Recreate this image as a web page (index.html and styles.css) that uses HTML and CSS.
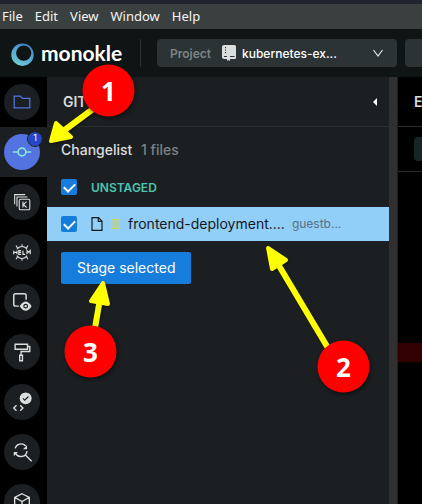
FILE: index.html
```html
<!DOCTYPE html>
<html lang="en">
<head>
<meta charset="utf-8">
<title>Monokle</title>
<link rel="stylesheet" href="styles.css">
</head>
<body>
<nav class="menubar">
  <button>File</button><button>Edit</button><button>View</button><button>Window</button><button>Help</button>
</nav>
<header class="topbar">
  <a class="brand" href="#">
    <svg class="logo" viewBox="0 0 24 24" aria-hidden="true">
      <defs><linearGradient id="ring" x1="0.8" y1="0" x2="0.3" y2="1"><stop offset="0" stop-color="#3c80cf"/><stop offset="1" stop-color="#71cbd2"/></linearGradient></defs>
      <path fill="url(#ring)" fill-rule="evenodd" d="M12.500 2.500a11.200 11.200 0 1 1 0 22.400A11.200 11.200 0 0 1 12.500 2.500zM13.700 4.500a7.600 7.600 0 1 0 0 15.200 7.600 7.600 0 0 0 0-15.200z"/>
    </svg>
    <span>monokle</span>
  </a>
  <span class="divider"></span>
  <button class="project">
    <span class="project-label">Project</span>
    <svg class="repo" viewBox="0 0 14 16" aria-hidden="true"><path fill="#dcdede" d="M2 0h10.500Q14 0 14 1.500V13q0 1-1 1H8v2l-1.500-1L5 16v-2H2q-2 0-2-2V2Q0 0 2 0z"/><path stroke="#2b3335" d="M3.500 2v1.200M3.500 4.500v1.200M3.500 7v1.200M2 11.500h3M8 11.500h4.500" fill="none"/></svg>
    <span class="project-name">kubernetes-ex...</span>
    <svg class="chevron" viewBox="0 0 10 8" aria-hidden="true"><path d="M.5 1 5 7 9.500 1" fill="none" stroke="#e4e6e6" stroke-width="1.200"/></svg>
  </button>
  <button class="cluster" aria-label="Cluster"></button>
</header>
<main class="workspace">
  <nav class="rail">
    <div class="slot"><button class="tool blue" aria-label="Files"><svg viewBox="0 0 24 24"><path d="M3.500 5.500h6.500l2.500 2.500H20.500V18.500H3.500z"/></svg></button></div>
    <div class="slot active"><button class="tool current" aria-label="Git"><svg viewBox="0 0 24 24"><circle cx="12" cy="12" r="4.200"/><path d="M2 12H8M16 12h6"/></svg><span class="count">1</span></button></div>
    <div class="slot"><button class="tool" aria-label="Kustomize"><svg viewBox="0 0 24 24"><rect x="9" y="9" width="11.500" height="11.500" rx="1.500"/><path d="M6.500 17V6.500H18M4 14.500V4h11.500M13 11.500v6.500M17 11.500l-3.500 3.200 3.500 3.300"/></svg></button></div>
    <div class="slot"><button class="tool" aria-label="Helm"><svg viewBox="0 0 24 24"><path d="M6.500 9a6.500 6.500 0 0 1 11 0M6.500 16a6.500 6.500 0 0 0 11 0M12 6V3.500M12 19v2.500M7 7.500 5.500 5M17 7.500 18.500 5M7 17.500 5.500 20M17 17.500l1.500 2.500"/><path stroke-width="1.300" d="M3 10.500v4M6.500 10.500v4M3 12.500h3.500M11 10.500H8.500v4H11M8.500 12.500H11M13 10.500v4h2.500M17.500 14.500v-4l1.700 2 1.800-2v4"/></svg></button></div>
    <div class="slot"><button class="tool" aria-label="Preview"><svg viewBox="0 0 24 24"><path stroke-width="1.600" d="M8.500 16.500H5Q3 16.500 3 14.500V5Q3 3 5 3H14.500Q16.500 3 16.500 5V9.500"/><path fill="#dcdede" stroke="none" d="M9.500 16.500q6.500-10 13 0-6.500 10-13 0z"/><circle cx="16" cy="16.500" r="2" stroke="#1b1f21" stroke-width="1.300"/></svg></button></div>
    <div class="slot"><button class="tool" aria-label="Templates"><svg viewBox="0 0 24 24"><path stroke-width="1.500" d="M4.500 3.500h13.500V9H4.500zM18 6h2.500v5.500h-9.500V15M9.500 15.500h3v6H9.500z"/></svg></button></div>
    <div class="slot"><button class="tool" aria-label="Validation"><svg viewBox="0 0 24 24"><circle cx="16" cy="8" r="6.500" fill="#dcdede" stroke="none"/><path stroke="#1b1f21" d="M13 8l2 2 4-4"/><path stroke-width="1.500" d="M6 15.500 3 18.500 6 21.500M10 15.500l3 3-3 3"/></svg></button></div>
    <div class="slot"><button class="tool" aria-label="Search"><svg viewBox="0 0 24 24"><path stroke-width="1.500" d="M4.500 8a6.700 6.700 0 0 1 11.500-2.500M17.500 11a6.700 6.700 0 0 1-12.500 2.500M16 15.500l6.500 6.500"/><path fill="#dcdede" stroke="none" d="M17.500 4.500v4.500H13zM3 16.500V12h4.500z"/></svg></button></div>
    <div class="slot"><button class="tool" aria-label="Images"><svg viewBox="0 0 24 24"><path stroke-width="1.500" d="M12 3 20 7v9.500L12 21 4 16.500V7zM4 7l8 4.500L20 7M12 11.500V21"/></svg></button></div>
  </nav>
  <section class="git">
    <div class="pane-head"><h1>GIT</h1><button class="collapse" aria-label="Collapse"><svg viewBox="0 0 4 8"><path fill="#fff" d="M4 0v8L0 4z"/></svg></button></div>
    <h2 class="changelist">Changelist <span>1 files</span></h2>
    <label class="group"><input type="checkbox" checked><span>UNSTAGED</span></label>
    <label class="file"><input type="checkbox" checked>
      <svg class="doc" viewBox="0 0 12 14" aria-hidden="true"><path d="M1 .7h6.500L11 4.200v9.100H1zM7.300.7v3.700H11" fill="none" stroke="#15191b" stroke-width="1.200"/></svg>
      <span class="dot"></span><span class="file-name">frontend-deployment....</span><span class="file-path">guestb...</span>
    </label>
    <button class="stage">Stage selected</button>
  </section>
  <div class="splitter"></div>
  <section class="editor">
    <div class="editor-head">E</div>
    <div class="editor-tools"><span class="chip"></span></div>
    <div class="code"><div class="removed"></div></div>
  </section>
</main>
<svg class="callouts" viewBox="0 0 422 504" role="img" aria-label="Steps 1, 2 and 3">
  <g class="arrow">
    <path class="shaft" d="M93 109 62 132"/><path class="head" d="M51 141 56 123 71 137z"/>
    <path class="shaft" d="M328 348 278 264"/><path class="head" d="M268 248 272 269 286 260z"/>
    <path class="shaft" d="M95 328 100 299"/><path class="head" d="M103 283 91 301 108 304z"/>
  </g>
  <g class="ball"><circle cx="108.500" cy="90.500" r="26"/><circle cx="343.500" cy="366.500" r="26"/><circle cx="90.500" cy="351.500" r="26"/></g>
  <g class="digit"><text x="108.500" y="101">1</text><text x="343.500" y="377">2</text><text x="90.500" y="362">3</text></g>
</svg>
</body>
</html>
```
FILE: styles.css
```css
* { box-sizing: border-box; }
body {
  margin: 0;
  height: 100vh;
  display: flex;
  flex-direction: column;
  overflow: hidden;
  position: relative;
  background: #000;
  color: #dcdede;
  font-family: Inter, "Liberation Sans", sans-serif;
}
button { border: 0; padding: 0; margin: 0; background: none; color: inherit; font: inherit; }
svg { display: block; flex: none; }

.menubar {
  display: flex;
  flex: none;
  gap: 12px;
  height: 29px;
  padding-left: 2px;
  border-top: 4px solid #20242f;
  background: #3a4040;
  color: #f4f4f4;
  font: 13px/24px "Noto Sans", sans-serif;
}
.menubar button { height: 24px; }

.topbar {
  display: flex;
  flex: none;
  align-items: center;
  height: 48px;
  padding-left: 10px;
  background: #0f1414;
}
.brand {
  display: flex;
  align-items: center;
  gap: 7px;
  width: 130px;
  color: #fff;
  font: bold 21px/24px Lato, sans-serif;
  text-decoration: none;
}
.logo { width: 24px; height: 24px; overflow: visible; }
.divider { width: 1px; height: 28px; margin-right: 16px; background: #2b2f31; }
.project {
  display: flex;
  flex: none;
  align-items: center;
  width: 240px;
  height: 28px;
  padding: 0 14px 0 13px;
  border-radius: 4px;
  background: #2b3335;
  font-size: 12px;
}
.project-label { color: #7d8384; font-weight: 600; }
.repo { width: 14px; height: 16px; margin: 0 6px 0 11px; }
.project-name { color: #fff; font-weight: 500; }
.chevron { width: 10px; height: 8px; margin-left: auto; }
.cluster { flex: 1; height: 28px; margin-left: 8px; border-radius: 4px 0 0 4px; background: #2b3335; }

.workspace { display: flex; flex: 1; min-height: 0; overflow: hidden; }
.rail { flex: none; width: 47px; background: #000; }
.slot { height: 50px; padding: 7px 4px; }
.active { background: #1b1f21; }
.tool {
  display: grid;
  place-items: center;
  position: relative;
  width: 36px;
  height: 36px;
  border-radius: 50%;
  background: #1b1f21;
}
.tool svg { width: 22px; height: 22px; fill: none; stroke: #dcdede; stroke-width: 1.2; }
.blue svg { stroke: #5273e0; stroke-width: 1.4; }
.current { background: #5273e0; }
.current svg { stroke: #82e8d8; stroke-width: 1.8; }
.count {
  position: absolute;
  top: -2px;
  right: -2px;
  width: 14px;
  height: 14px;
  border-radius: 50%;
  outline: 1px solid #1b1f21;
  background: #2447c9;
  color: #fff;
  font-size: 9px;
  line-height: 12px;
}

.git { flex: none; width: 342px; background: #1b1f21; }
.pane-head {
  display: flex;
  align-items: center;
  justify-content: space-between;
  height: 50px;
  padding: 0 12px 0 16px;
  border-bottom: 1px solid #2b2d2e;
}
.pane-head h1 { margin: 0; font-size: 14px; font-weight: 600; }
.collapse svg { width: 4px; height: 8px; }
.changelist { margin: 0; padding: 13px 14px; font-size: 14px; line-height: 20px; font-weight: 500; }
.changelist span { margin-left: 5px; color: #7d8384; }
.group {
  display: flex;
  align-items: center;
  gap: 14px;
  height: 28px;
  margin-bottom: 6px;
  padding-left: 14px;
  color: #4dc5b0;
  font-size: 12px;
  font-weight: 600;
}
.file {
  display: flex;
  align-items: center;
  height: 34px;
  padding-left: 14px;
  background: #91cff9;
  color: #15191b;
  white-space: nowrap;
}
input[type="checkbox"] {
  appearance: none;
  display: grid;
  place-items: center;
  flex: none;
  width: 16px;
  height: 16px;
  margin: 0;
  border-radius: 2px;
  background: #177ddc;
}
input[type="checkbox"]::after {
  content: "";
  width: 9px;
  height: 5px;
  margin-bottom: 2px;
  border: solid #fff;
  border-width: 0 0 2px 2px;
  transform: rotate(-45deg);
}
.doc { width: 12px; height: 14px; margin: 0 8px 0 14px; }
.dot { width: 9px; height: 10px; margin-right: 8px; border: 1px solid #d5d25c; border-radius: 2px; background: #adcfae; }
.file-name { padding-bottom: 2px; font-size: 14px; }
.file-path { padding-bottom: 2px; margin-left: 7px; color: #5a7180; font-size: 12px; }
.stage {
  height: 32px;
  margin: 11px 14px;
  padding: 0 16px 2px;
  border-radius: 2px;
  background: #177ddc;
  color: #fff;
  font-size: 14px;
}
.splitter { flex: none; width: 9px; background: #303030; border-right: 1px solid #1f1f1f; }
.editor { flex: 1; overflow: hidden; background: #000; }
.editor-head { height: 50px; padding-left: 16px; border-bottom: 1px solid #2b2d2e; font-size: 14px; font-weight: 600; line-height: 49px; }
.editor-tools { height: 45px; padding: 10px 0 0 16px; border-bottom: 1px solid #2b2d2e; }
.chip { display: block; height: 24px; border-radius: 4px 0 0 4px; background: #162625; }
.code { padding-top: 171px; }
.removed { height: 19px; background: #330000; }

.callouts { position: absolute; top: 0; left: 0; width: 422px; height: 504px; pointer-events: none; }
.arrow { filter: drop-shadow(1px 1px 1px rgb(0 0 0 / 40%)); stroke: #ff0; stroke-linejoin: round; }
.shaft { stroke-width: 6; }
.head { fill: #ff0; stroke-width: 4; }
.ball { fill: #f00; filter: drop-shadow(1px 2px 2px rgb(0 0 0 / 50%)); }
.digit { fill: #fff; font: bold 26px "Open Sans", sans-serif; text-anchor: middle; }
```
